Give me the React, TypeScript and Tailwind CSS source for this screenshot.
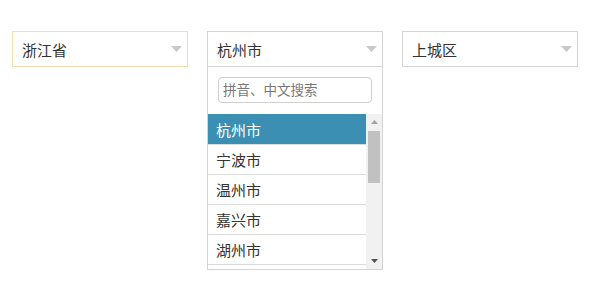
import React from "react";

const Caret = () => (
  <svg width="11" height="6" viewBox="0 0 11 6" className="shrink-0">
    <path d="M0 0 L11 0 L5.5 6 Z" fill="#c8c8c8" />
  </svg>
);

const cities = ["杭州市", "宁波市", "温州市", "嘉兴市", "湖州市", ""];

export default function App() {
  return (
    <div
      className="w-[590px] h-[300px] bg-white text-[#333]"
      style={{ fontFamily: '"Noto Sans CJK SC", "Noto Sans", sans-serif' }}
    >
      <div className="flex items-start gap-[19px] pl-[12px] pt-[31px]">
        <div className="w-[176px] h-[36px] border border-[#f3e0b0] flex items-center justify-between pl-[9px] pr-[5px]">
          <span className="text-[15px] leading-none">浙江省</span>
          <Caret />
        </div>

        <div className="w-[176px] border border-[#d4d4d4] flex flex-col">
          <div className="h-[35px] border-b border-[#d4d4d4] flex items-center justify-between pl-[9px] pr-[5px]">
            <span className="text-[15px] leading-none">杭州市</span>
            <Caret />
          </div>
          <div className="px-[10px] pt-[10px] pb-[11px]">
            <div className="h-[26px] border border-[#cfcfcf] rounded-[4px] flex items-center pl-[4px] text-[13.5px] text-[#777] leading-none">
              拼音、中文搜索
            </div>
          </div>
          <div className="flex h-[155px] overflow-hidden">
            <div className="flex-1 flex flex-col">
              {cities.map((c, i) => (
                <div
                  key={i}
                  className={
                    i === 0
                      ? "h-[30px] shrink-0 flex items-center pl-[8px] bg-[#3a8fb2] text-white text-[15px] leading-none"
                      : "h-[30px] shrink-0 flex items-center pl-[8px] border-t border-[#dcdcdc] text-[15px] leading-none"
                  }
                >
                  {c}
                </div>
              ))}
            </div>
            <div className="w-[16px] bg-[#f1f1f1] flex flex-col items-center">
              <div className="h-[16px] flex items-center justify-center">
                <svg width="7" height="4" viewBox="0 0 7 4">
                  <path d="M0 4 L7 4 L3.5 0 Z" fill="#a3a3a3" />
                </svg>
              </div>
              <div className="mt-[1px] w-[12px] h-[52px] bg-[#c1c1c1]" />
              <div className="flex-1" />
              <div className="h-[16px] flex items-center justify-center">
                <svg width="7" height="4" viewBox="0 0 7 4">
                  <path d="M0 0 L7 0 L3.5 4 Z" fill="#505050" />
                </svg>
              </div>
            </div>
          </div>
        </div>

        <div className="w-[176px] h-[36px] border border-[#d4d4d4] flex items-center justify-between pl-[9px] pr-[5px]">
          <span className="text-[15px] leading-none">上城区</span>
          <Caret />
        </div>
      </div>
    </div>
  );
}
